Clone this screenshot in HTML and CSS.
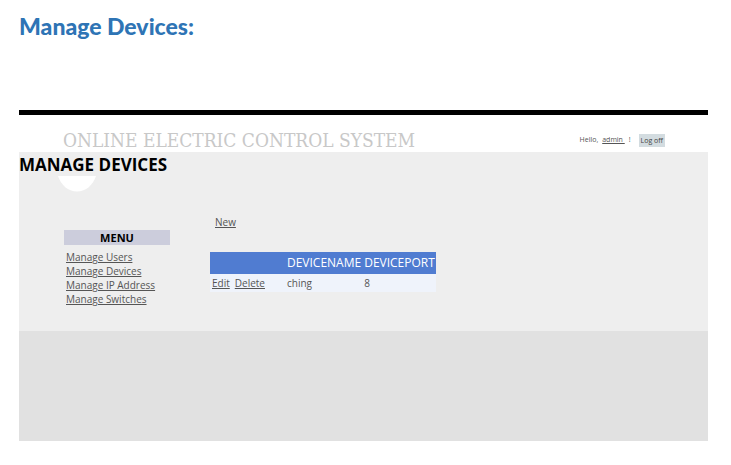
FILE: index.html
```html
<!DOCTYPE html>
<html lang="en">
<head>
<meta charset="utf-8">
<title>Manage Devices</title>
<link rel="stylesheet" href="styles.css">
</head>
<body>
<h1 class="doc-title">Manage Devices:</h1>
<div class="site">
  <header class="header">
    <p class="brand">ONLINE ELECTRIC CONTROL SYSTEM</p>
    <div class="login">
      <span>Hello,</span>
      <a class="user" href="#">admin&nbsp;</a>
      <span>!</span>
      <button class="logoff" type="button">Log off</button>
    </div>
  </header>
  <main class="main">
    <h2 class="page-title">MANAGE DEVICES</h2>
    <svg class="arc" viewBox="0 0 38 16" width="38" height="16" aria-hidden="true"><path d="M0 0H38C35 9 28 15.500 19 15.500S3 9 0 0Z" fill="#fff"/></svg>
    <div class="columns">
      <nav class="menu">
        <h3 class="menu-title">MENU</h3>
        <ul class="menu-list">
          <li><a href="#">Manage Users</a></li>
          <li><a href="#">Manage Devices</a></li>
          <li><a href="#">Manage IP Address</a></li>
          <li><a href="#">Manage Switches</a></li>
        </ul>
      </nav>
      <section class="content">
        <a class="new" href="#">New</a>
        <table class="devices">
          <thead>
            <tr><td></td><th scope="col">DEVICENAME</th><th scope="col">DEVICEPORT</th></tr>
          </thead>
          <tbody>
            <tr><td class="actions"><a href="#">Edit</a><a href="#">Delete</a></td><td>ching</td><td>8</td></tr>
          </tbody>
        </table>
      </section>
    </div>
  </main>
  <footer class="footer"></footer>
</div>
</body>
</html>
```
FILE: styles.css
```css
* { box-sizing: border-box; }

body {
  margin: 0;
  padding: 10px 23px 24px 19px;
  background: #fff;
  color: #555;
  font: 10px/14px "Open Sans", sans-serif;
}

h1, h2, h3, p, ul { margin: 0; padding: 0; }
a { color: inherit; }

.doc-title {
  margin-bottom: 68px;
  color: #2e74b5;
  font: 900 23px/32px Lato, sans-serif;
}

.site { border-top: 5px solid #000; }

.header {
  display: flex;
  justify-content: space-between;
  align-items: center;
  height: 37px;
  padding: 13px 43px 0 44px;
}

.brand {
  color: #c8c8c8;
  font: 19px/24px "DejaVu Serif Condensed", "DejaVu Serif", serif;
  white-space: nowrap;
}

.login {
  display: flex;
  align-items: center;
  gap: 4px;
  font-size: 7px;
}

.logoff {
  height: 13px;
  margin-left: 4px;
  padding: 0 2px;
  border: 0;
  background: #d3dce0;
  color: #444;
  font: inherit;
}

.main {
  min-height: 179px;
  padding-bottom: 24px;
  background: #eee;
}

.page-title {
  padding-top: 2px;
  color: #000;
  font: bold 17px/22px "Open Sans", sans-serif;
}

.arc { display: block; margin-left: 39px; }

.columns {
  display: flex;
  gap: 40px;
  padding: 23px 45px 0;
}

.menu { width: 106px; padding-top: 15px; }

.menu-title {
  margin-bottom: 5px;
  background: #cccddc;
  color: #000;
  font: bold 11px/15px "Open Sans", sans-serif;
  text-align: center;
}

.menu-list { padding-left: 2px; list-style: none; white-space: nowrap; }

.new { display: inline-block; margin: 0 0 23px 5px; }

.devices { border-collapse: collapse; background: #eff3fb; }
.devices th, .devices td { padding: 2px 1px 2px 2px; text-align: left; }
.devices thead { background: #507cd1; color: #fff; font-size: 12px; line-height: 18px; }
.devices th { font-weight: normal; }
.devices .actions { padding-right: 20px; }
.actions a + a { margin-left: 5px; }

.footer { height: 110px; background: #e1e1e1; }
```
